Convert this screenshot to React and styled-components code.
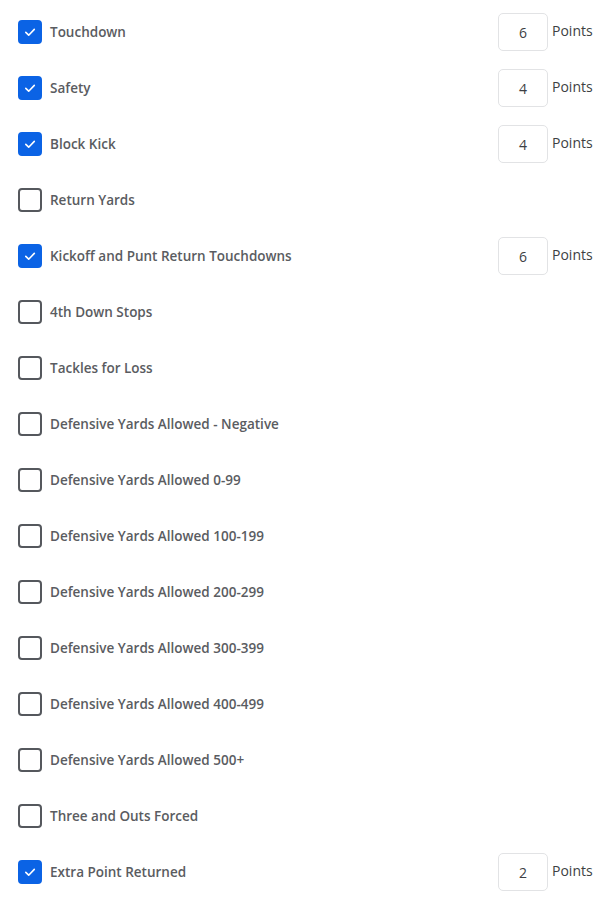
import React from 'react';
import styled, { createGlobalStyle } from 'styled-components';

const GlobalStyle = createGlobalStyle`
  body {
    margin: 0;
    background: #fff;
    font-family: 'Open Sans', 'Noto Sans', sans-serif;
  }
`;

const List = styled.div`
  width: 610px;
  padding: 4px 0 0 18px;
  box-sizing: border-box;
  display: flex;
  flex-direction: column;
`;

const Row = styled.div`
  height: 56px;
  display: flex;
  align-items: center;
`;

const Box = styled.span`
  width: 24px;
  height: 24px;
  box-sizing: border-box;
  border-radius: 4px;
  flex-shrink: 0;
  display: flex;
  align-items: center;
  justify-content: center;
  background: ${(p) => (p.checked ? '#0b63e5' : '#fff')};
  border: 2px solid ${(p) => (p.checked ? '#0b63e5' : '#55585d')};
`;

const Label = styled.span`
  margin-left: 8px;
  font-size: 13.5px;
  font-weight: 600;
  color: #5a5c61;
  flex: 1;
  margin-bottom: 1px;
`;

const PointsInput = styled.div`
  width: 50px;
  height: 38px;
  box-sizing: border-box;
  border: 1px solid #e2e3e5;
  border-radius: 5px;
  display: flex;
  align-items: center;
  justify-content: center;
  font-size: 14px;
  color: #3d3f43;
`;

const Unit = styled.span`
  margin-left: 4px;
  width: 58px;
  font-size: 14px;
  color: #3d3f43;
  margin-bottom: 3px;
`;

const rules = [
  { name: 'Touchdown', value: 6 },
  { name: 'Safety', value: 4 },
  { name: 'Block Kick', value: 4 },
  { name: 'Return Yards' },
  { name: 'Kickoff and Punt Return Touchdowns', value: 6 },
  { name: '4th Down Stops' },
  { name: 'Tackles for Loss' },
  { name: 'Defensive Yards Allowed - Negative' },
  { name: 'Defensive Yards Allowed 0-99' },
  { name: 'Defensive Yards Allowed 100-199' },
  { name: 'Defensive Yards Allowed 200-299' },
  { name: 'Defensive Yards Allowed 300-399' },
  { name: 'Defensive Yards Allowed 400-499' },
  { name: 'Defensive Yards Allowed 500+' },
  { name: 'Three and Outs Forced' },
  { name: 'Extra Point Returned', value: 2 },
];

const Check = () => (
  <svg width="14" height="14" viewBox="0 0 14 14" fill="none">
    <path d="M2.8 7.4l2.9 2.8 5.6-5.8" stroke="#fff" strokeWidth="1.6" strokeLinecap="round" strokeLinejoin="round" />
  </svg>
);

const App = () => (
  <>
    <GlobalStyle />
    <List>
      {rules.map((r) => {
        const checked = r.value !== undefined;
        return (
          <Row key={r.name}>
            <Box checked={checked}>{checked && <Check />}</Box>
            <Label>{r.name}</Label>
            {checked && (
              <>
                <PointsInput>{r.value}</PointsInput>
                <Unit>Points</Unit>
              </>
            )}
          </Row>
        );
      })}
    </List>
  </>
);

export default App;
